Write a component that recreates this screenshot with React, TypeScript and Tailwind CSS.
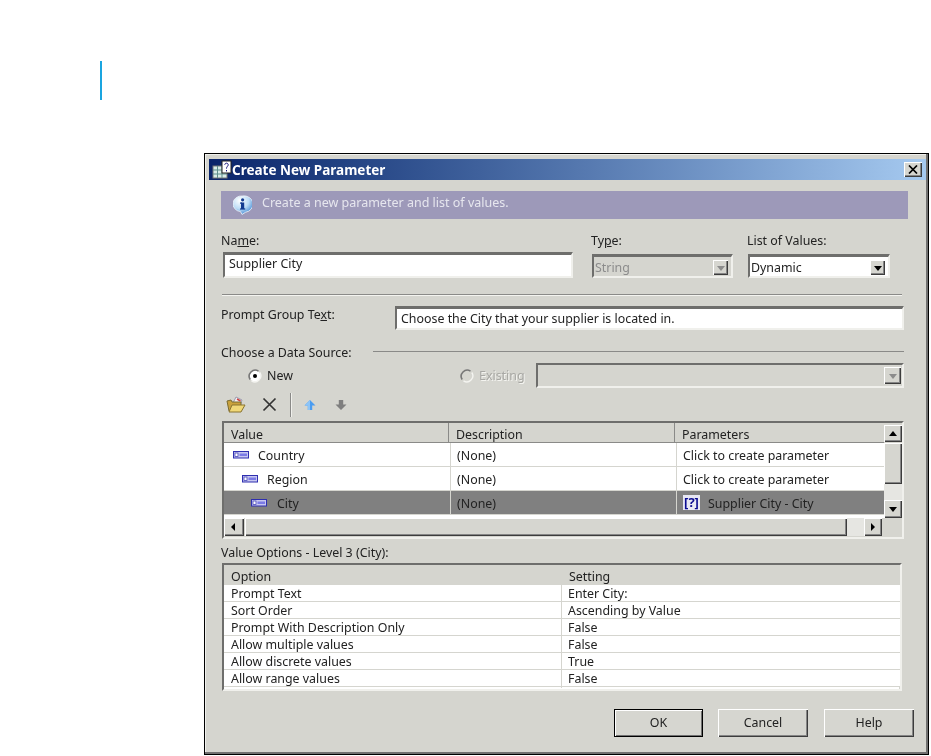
import React from "react";

const sunken = "border-2 border-t-[3px] border-t-[#6e6e6c] border-l-[#6e6e6c] border-r-[#f0f0ec] border-b-[#f0f0ec]";
const sunkenThin = "border-2 border-t-[#6e6e6c] border-l-[#6e6e6c] border-r-[#f0f0ec] border-b-[#f0f0ec]";
const raised = "shadow-[inset_1px_1px_0_#ffffff,inset_-1px_-1px_0_#3c3c3c,inset_-2px_-2px_0_#858585]";

function FieldIcon() {
  return (
    <svg width="16" height="9" viewBox="0 0 16 9" className="shrink-0">
      <rect x="0.5" y="1.5" width="15" height="6.5" fill="#c8c8f0" stroke="#2f2fb0" />
      <rect x="2" y="3" width="3" height="3.5" fill="#ffffff" stroke="#2f2fb0" strokeWidth="0.7" />
      <rect x="6.5" y="3.5" width="7.5" height="2.5" fill="#7b7be6" />
    </svg>
  );
}

function Arrow({ dir, color = "#000000" }: { dir: "up" | "down" | "left" | "right"; color?: string }) {
  const pts = { up: "4,1 0,6 8,6", down: "0,2 8,2 4,7", left: "5,0 5,8 1,4", right: "2,0 2,8 6,4" }[dir];
  return (
    <svg width="8" height="8" viewBox="0 0 8 8">
      <polygon points={pts} fill={color} />
    </svg>
  );
}

function ScrollBtn({ dir, className = "" }: { dir: "up" | "down" | "left" | "right"; className?: string }) {
  return <div className={`flex items-center justify-center bg-[#d6d6d0] ${raised} ${className}`}><Arrow dir={dir} /></div>;
}

function ComboBtn({ disabled = false }: { disabled?: boolean }) {
  return (
    <div className={`w-[15px] h-[15px] shrink-0 flex items-center justify-center bg-[#d6d6d0] ${raised}`}>
      <Arrow dir="down" color={disabled ? "#8c8c8c" : "#000000"} />
    </div>
  );
}

function Radio({ checked, disabled }: { checked?: boolean; disabled?: boolean }) {
  return (
    <svg width="14" height="14" viewBox="0 0 14 14" className="shrink-0">
      <circle cx="7" cy="7" r="5.6" fill={disabled ? "#d6d6d0" : "#ffffff"} />
      <path d="M2.2 10.5A6 6 0 0 1 10.5 2.2" fill="none" stroke="#777777" strokeWidth="1.6" />
      <path d="M11.8 3.5A6 6 0 0 1 3.5 11.8" fill="none" stroke="#f4f4f0" strokeWidth="1.4" />
      {checked && <circle cx="7" cy="7" r="2" fill="#000000" />}
    </svg>
  );
}

const paramRows = [
  { name: "Country", indent: "pl-[9px]", gap: "gap-[9px]" },
  { name: "Region", indent: "pl-[18px]", gap: "gap-[9px]" },
  { name: "City", indent: "pl-[27px]", gap: "gap-[10px]" },
];

const optionRows = [
  ["Prompt Text", "Enter City:"],
  ["Sort Order", "Ascending by Value"],
  ["Prompt With Description Only", "False"],
  ["Allow multiple values", "False"],
  ["Allow discrete values", "True"],
  ["Allow range values", "False"],
];

export default function App() {
  return (
    <div className="w-[931px] h-[756px] overflow-hidden bg-white pt-[61px] text-[12.4px] leading-[16px] text-[#222222] [font-family:'Noto_Sans',sans-serif]">
      <div className="ml-[100px] w-[2px] h-[39px] bg-[#1aa5e0]" />
      <div className="ml-[204px] mt-[53px] w-[725px] h-[602px] border border-black bg-[#d5d5cf] pt-[5px] pl-[4px] blur-[0.3px] shadow-[inset_-2px_-2px_0_#707070,inset_1px_1px_0_#f0f0ec]">
        {/* Title bar */}
        <div className="w-[717px] h-[21px] flex items-center bg-gradient-to-r from-[#0a246a] to-[#a6caf0] pl-[3px] pr-[4px]">
          <svg width="20" height="19" viewBox="0 0 20 19" className="shrink-0">
            <rect x="1" y="6" width="14" height="12" fill="#d8ece8" stroke="#777777" />
            <path d="M1 10H15M1 14H15M5.5 6V18M10 6V18" stroke="#5f8f8c" />
            <rect x="10" y="1" width="9" height="12" fill="#ffffff" stroke="#222222" />
            <path d="M12.8 4.8C12.8 2.6 16.2 2.6 16.2 4.8C16.2 6.4 14.5 6.4 14.5 8.6M14.5 10V11.4" fill="none" stroke="#111177" />
          </svg>
          <span className="text-[13.5px] font-bold text-white">Create New Parameter</span>
          <div className={`ml-auto w-[18px] h-[15px] flex items-center justify-center bg-[#d6d6d0] ${raised}`}>
            <svg width="10" height="9" viewBox="0 0 10 9"><path d="M1 0.5L9 8.5M9 0.5L1 8.5" stroke="#000" strokeWidth="1.7" /></svg>
          </div>
        </div>

        {/* Info bar */}
        <div className="ml-[12px] mt-[11px] w-[687px] h-[28px] bg-[#9d99b9] flex items-center pl-[12px] gap-[10px] text-[12.5px] text-[#e6e6ee]">
          <svg width="19" height="20" viewBox="0 0 19 20" className="shrink-0">
            <defs>
              <radialGradient id="infoBall" cx="0.35" cy="0.25" r="0.8">
                <stop offset="0" stopColor="#ffffff" />
                <stop offset="0.55" stopColor="#bcdcf6" />
                <stop offset="1" stopColor="#3f86d2" />
              </radialGradient>
            </defs>
            <path d="M9.5 1a8.5 7.8 0 0 1 3 16.3L9 19.5L7.5 16.6A8.5 7.8 0 0 1 9.5 1z" fill="url(#infoBall)" stroke="#f0f4fa" strokeWidth="0.8" />
            <rect x="8" y="7.5" width="3.2" height="6.5" fill="#123a90" />
            <rect x="7" y="7.5" width="2" height="1.2" fill="#123a90" />
            <rect x="7" y="13.4" width="5.2" height="1.2" fill="#123a90" />
            <circle cx="9.6" cy="4.8" r="1.6" fill="#123a90" />
          </svg>
          <span className="pb-[4px]">Create a new parameter and list of values.</span>
        </div>

        {/* Name / Type / List */}
        <div className="mt-[14px] ml-[12px] h-[47px] flex">
          <div className="w-[370px]">
            <div>Na<u>m</u>e:</div>
            <div className={`ml-[2px] mt-[3px] w-[350px] h-[26px] bg-white pl-[4px] pb-[3px] flex items-center ${sunken}`}>Supplier City</div>
          </div>
          <div className="w-[156px]">
            <div>Ty<u>p</u>e:</div>
            <div className={`ml-[1px] mt-[5px] w-[141px] h-[24px] bg-[#d5d5cf] flex items-center justify-between pl-[1px] pr-[3px] pt-[2px] text-[#8c8c8c] ${sunken}`}>
              String <ComboBtn disabled />
            </div>
          </div>
          <div className="w-[150px]">
            <div>List of Values:</div>
            <div className={`ml-[1px] mt-[5px] w-[142px] h-[24px] bg-white flex items-center justify-between pl-[1px] pr-[3px] pt-[2px] ${sunken}`}>
              Dynamic <ComboBtn />
            </div>
          </div>
        </div>

        {/* Separator */}
        <div className="ml-[13px] mt-[14px] w-[680px] border-t border-b border-t-[#8a8a88] border-b-[#f4f4f0]" />

        {/* Prompt group */}
        <div className="mt-[10px] ml-[12px] flex h-[24px]">
          <div className="w-[174px] pt-[1px]">Prompt Group Te<u>x</u>t:</div>
          <div className={`w-[509px] h-[24px] bg-white pl-[4px] flex items-center ${sunken}`}>Choose the City that your supplier is located in.</div>
        </div>

        {/* Data source */}
        <div className="mt-[15px] ml-[12px] flex items-center h-[16px]">
          <span className="w-[152px]">Choose a Data Source:</span>
          <div className="w-[531px] mb-[4px] border-t border-t-[#8a8a88]" />
        </div>
        <div className="mt-[2px] ml-[39px] h-[25px] flex items-center">
          <Radio checked />
          <span className="ml-[5px] w-[193px] pt-[1px]">New</span>
          <Radio disabled />
          <span className="ml-[5px] w-[57px] pt-[1px] text-[#a8a8a4] [text-shadow:1px_1px_0_#f4f4f0]">Existing</span>
          <div className={`w-[368px] h-[25px] flex items-center justify-end pr-[1px] ${sunkenThin}`}>
            <div className={`w-[17px] h-[17px] flex items-center justify-center bg-[#d6d6d0] ${raised}`}><Arrow dir="down" color="#8c8c8c" /></div>
          </div>
        </div>

        {/* Toolbar */}
        <div className="mt-[6px] ml-[17px] h-[21px] flex items-center">
          <svg width="20" height="19" viewBox="0 0 20 19" className="shrink-0">
            <path d="M7 8L10 2L16 5L14 10Z" fill="#f4f4f4" stroke="#9a9ab0" />
            <path d="M11 4L14.5 6" stroke="#d04040" strokeWidth="1.5" />
            <path d="M1 6L5 5L6 7H15V16H3Z" fill="#c9a23c" stroke="#7a6a30" />
            <path d="M3 17L6 10H19L15 17Z" fill="#f0d878" stroke="#8a7430" />
          </svg>
          <svg width="15" height="15" viewBox="0 0 15 15" className="ml-[16px] shrink-0"><path d="M1.5 1.5L13.5 13.5M13.5 1.5L1.5 13.5" stroke="#333333" strokeWidth="1.7" /></svg>
          <div className="ml-[13px] w-[2px] h-[24px] border-l border-l-[#8a8a88] bg-[#f0f0ec]" />
          <svg width="12" height="12" viewBox="0 0 12 12" className="ml-[12px] shrink-0"><path d="M6 1L11.5 6.5H8.2V11H3.8V6.5H0.5Z" fill="#4a9cf0" /><path d="M6 1L0.5 6.5H3.8V11H6Z" fill="#8cc4f8" /></svg>
          <svg width="12" height="12" viewBox="0 0 12 12" className="ml-[19px] shrink-0"><path d="M3.8 1H8.2V5.5H11.5L6 11L0.5 5.5H3.8Z" fill="#7f7f7f" /></svg>
        </div>

        {/* Parameter table */}
        <div className={`mt-[6px] ml-[13px] w-[682px] h-[118px] bg-[#d5d5cf] grid grid-cols-[1fr_18px] grid-rows-[95px_19px] ${sunkenThin}`}>
          <div className="overflow-hidden bg-white">
            <div className="grid grid-cols-[225px_226px_1fr] h-[20px] leading-[14px] bg-[#d5d5cf] border-b border-b-[#8a8a88] items-end">
              <div className="pl-[7px] h-full flex items-end border-r border-r-[#8a8a88]">Value</div>
              <div className="pl-[7px] h-full flex items-end border-r border-r-[#8a8a88]">Description</div>
              <div className="pl-[7px]">Parameters</div>
            </div>
            {paramRows.map((r) => {
              const sel = r.name === "City";
              return (
                <div key={r.name} className={`grid grid-cols-[227px_226px_1fr] h-[24px] border-b border-b-[#d5d5cf] ${sel ? "bg-[#808080]" : "bg-white"}`}>
                  <div className={`${r.indent} ${r.gap} flex items-center border-r border-r-[#d5d5cf]`}><FieldIcon /><span className="pt-[2px]">{r.name}</span></div>
                  <div className="pl-[6px] pt-[2px] flex items-center border-r border-r-[#d5d5cf]">(None)</div>
                  <div className="pl-[6px] flex items-center">
                    {sel ? (
                      <>
                        <span className="w-[17px] h-[15px] mr-[8px] bg-[#e8e8f4] text-[#0a0a90] font-bold text-[13px] leading-[15px] text-center">[?]</span>
                        <span className="pt-[2px]">Supplier City - City</span>
                      </>
                    ) : <span className="pt-[2px]">Click to create parameter</span>}
                  </div>
                </div>
              );
            })}
          </div>
          <div className="flex flex-col pt-[2px]">
            <ScrollBtn dir="up" className="h-[17px] shrink-0" />
            <div className={`mt-[1px] h-[41px] shrink-0 bg-[#d6d6d0] ${raised}`} />
            <div className="flex-1 bg-[#e6e6e2]" />
            <ScrollBtn dir="down" className="h-[18px] shrink-0" />
          </div>
          <div className="flex h-[18px] pr-[2px]">
            <ScrollBtn dir="left" className="w-[20px] shrink-0" />
            <div className={`ml-[1px] w-[602px] bg-[#d6d6d0] ${raised}`} />
            <div className="flex-1 bg-[#e6e6e2]" />
            <ScrollBtn dir="right" className="w-[18px] shrink-0" />
          </div>
          <div className="bg-[#d5d5cf]" />
        </div>

        {/* Value options */}
        <div className="mt-[6px] ml-[12px] h-[16px]">Value Options - Level 3 (City):</div>
        <div className={`mt-[2px] ml-[13px] w-[680px] h-[128px] bg-white overflow-hidden ${sunkenThin}`}>
          <div className="grid grid-cols-[338px_1fr] h-[20px] bg-[#d5d5cf] items-end">
            <div className="pl-[7px]">Option</div>
            <div className="pl-[7px]">Setting</div>
          </div>
          {optionRows.map(([a, b]) => (
            <div key={a} className="grid grid-cols-[338px_1fr] h-[17px] leading-[18px] border-b border-b-[#d5d5cf]">
              <div className="pl-[7px] border-r border-r-[#d5d5cf]">{a}</div>
              <div className="pl-[6px]">{b}</div>
            </div>
          ))}
          <div className="ml-[337px] h-[4px] border-r border-r-[#d5d5cf]" />
        </div>

        {/* Buttons */}
        <div className="mt-[18px] ml-[405px] flex h-[28px]">
          <div className="w-[89px] h-full border border-black flex items-center justify-center bg-[#d6d6d0] shadow-[inset_1px_1px_0_#ffffff,inset_-1px_-1px_0_#707070]">OK</div>
          <div className={`ml-[15px] w-[90px] h-full flex items-center justify-center bg-[#d6d6d0] ${raised}`}>Cancel</div>
          <div className={`ml-[16px] w-[90px] h-full flex items-center justify-center bg-[#d6d6d0] ${raised}`}>Help</div>
        </div>
      </div>
    </div>
  );
}
